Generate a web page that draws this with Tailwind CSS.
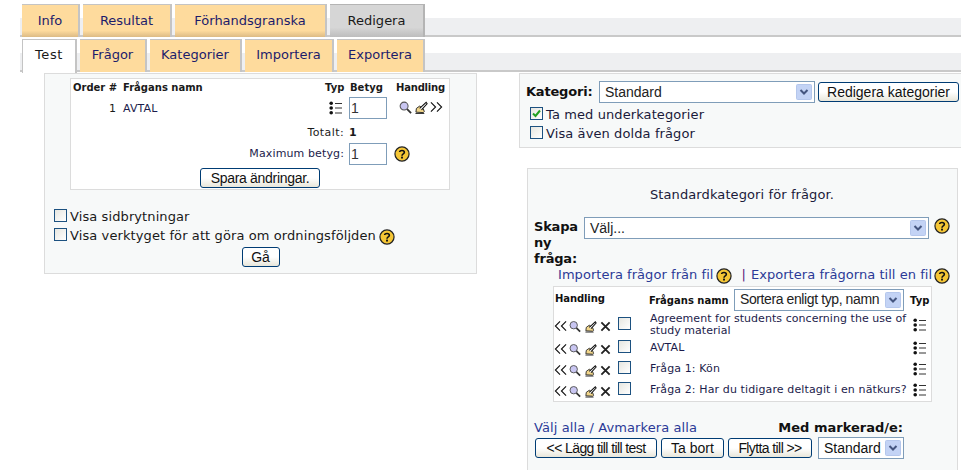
<!DOCTYPE html>
<html lang="sv">
<head>
<meta charset="UTF-8">
<title>Redigera test</title>
<script src="https://cdn.jsdelivr.net/npm/@tailwindcss/browser@4"></script>
</head>
<body class="bg-white h-[470px] w-[961px] overflow-hidden font-['DejaVu_Sans',sans-serif] text-[13px] text-[#1a1a1a]">

<svg class="hidden">
  <symbol id="help" viewBox="0 0 17 17">
    <circle cx="8.5" cy="8.5" r="7.5" fill="#f5c635" stroke="#222" stroke-width="1.3"/>
    <path d="M6 6.5C6 4.2 11 4.2 11 6.6C11 8.4 8.5 8.2 8.5 10.3" fill="none" stroke="#111" stroke-width="1.7"/>
    <rect x="7.5" y="11.3" width="2" height="2" fill="#111"/>
  </symbol>
  <symbol id="list" viewBox="0 0 13 14">
    <circle cx="2.2" cy="2.2" r="1.8" fill="#111"/><circle cx="2.2" cy="7" r="1.8" fill="#111"/><circle cx="2.2" cy="11.8" r="1.8" fill="#111"/>
    <path d="M6 2.5h7M6 7h7M6 12h7" stroke="#333" stroke-width="1"/>
  </symbol>
  <symbol id="zoom" viewBox="0 0 14 14">
    <path d="M8.5 8.5L13 13" stroke="#333" stroke-width="2"/>
    <circle cx="5.5" cy="5.5" r="4.3" fill="#c9c6f2" stroke="#555" stroke-width="1.1"/>
  </symbol>
  <symbol id="edit" viewBox="0 0 14 14">
    <path d="M1 12L1.5 8L5 5.5L7 7L9 8.5L10 11.5L9 12.5Z" fill="#f2d68a" stroke="#222"/>
    <path d="M5 8L12 1.5L13 3L7 9.5" fill="#fff" stroke="#111" stroke-width="1.2"/>
    <path d="M0.5 13.5H10" stroke="#222"/>
  </symbol>
  <symbol id="right" viewBox="0 0 14 12">
    <path d="M1 1L6 6L1 11M7.5 1L12.5 6L7.5 11" fill="none" stroke="#111" stroke-width="1.2"/>
  </symbol>
  <symbol id="left" viewBox="0 0 14 12">
    <path d="M6.5 1L1.5 6L6.5 11M13 1L8 6L13 11" fill="none" stroke="#111" stroke-width="1.2"/>
  </symbol>
  <symbol id="del" viewBox="0 0 12 12">
    <path d="M1.5 1.5L10.5 10.5M10.5 1.5L1.5 10.5" stroke="#222" stroke-width="2"/>
  </symbol>
  <symbol id="arrow" viewBox="0 0 16 16">
    <rect x="0.5" y="0.5" width="15" height="15" rx="1" fill="#c3d3f5" stroke="#b5c7ec"/>
    <path d="M4.5 6L8 9.5L11.5 6" fill="none" stroke="#44557f" stroke-width="2"/>
  </symbol>
</svg>

<!-- flikar -->
<div class="relative h-[35px] pt-1 pl-[22px] flex gap-[3px]">
  <div class="absolute left-[20px] right-0 top-[18px] h-[19px] bg-[#eeeff1] border-b-2 border-[#c9c9c9]"></div>
  <div class="relative w-[58px] h-[33px] flex items-center justify-center bg-gradient-to-b from-[#fedb9d] from-80% to-[#dcbb85] border-t border-r-2 border-[#c4c4c4] text-[#1c1c6b]">Info</div>
  <div class="relative w-[89px] h-[33px] flex items-center justify-center bg-gradient-to-b from-[#fedb9d] from-80% to-[#dcbb85] border-t border-r-2 border-[#c4c4c4] text-[#1c1c6b]">Resultat</div>
  <div class="relative w-[152px] h-[33px] flex items-center justify-center bg-gradient-to-b from-[#fedb9d] from-80% to-[#dcbb85] border-t border-r-2 border-[#c4c4c4] text-[#1c1c6b]">Förhandsgranska</div>
  <div class="relative w-[95px] h-[33px] flex items-center justify-center bg-gradient-to-b from-[#d6d6d6] from-70% to-[#bdbdbd] border-t border-r-2 border-[#b4b4b4] text-[#1a1a1a]">Redigera</div>
</div>
<div class="relative h-[33px] mt-[4px] pl-[22px] flex gap-[3px]">
  <div class="absolute left-[20px] right-0 top-[14px] h-[19px] bg-[#eeeff1] border-b-2 border-[#c9c9c9]"></div>
  <div class="relative w-[55px] h-[34px] pb-[3px] flex items-center justify-center bg-white border-t border-r-2 border-l border-[#c4c4c4] text-[#1a1a1a] tracking-[0.6px] z-10">Test</div>
  <div class="relative w-[67px] h-[33px] pb-[2px] flex items-center justify-center bg-[#fedb9d] border-t border-r-2 border-[#c4c4c4] text-[#1c1c6b]">Frågor</div>
  <div class="relative w-[92px] h-[33px] pb-[2px] flex items-center justify-center bg-[#fedb9d] border-t border-r-2 border-[#c4c4c4] text-[#1c1c6b]">Kategorier</div>
  <div class="relative w-[89px] h-[33px] pb-[2px] flex items-center justify-center bg-[#fedb9d] border-t border-r-2 border-[#c4c4c4] text-[#1c1c6b]">Importera</div>
  <div class="relative w-[88px] h-[33px] pb-[2px] flex items-center justify-center bg-[#fedb9d] border-t border-r-2 border-[#c4c4c4] text-[#1c1c6b]">Exportera</div>
</div>

<div class="flex items-start mt-[1px]">
  <!-- vänster -->
  <div class="ml-[44px] w-[433px] h-[201px] bg-[#f7f9f9] border border-[#dcdcdc] pt-[4px]">
    <div class="ml-[25px] w-[380px] h-[112px] bg-white border border-[#dcdcdc] text-[11px] tracking-[0.12px] relative">
      <div class="flex items-center h-[16px] mb-[2px] font-bold text-[10px] tracking-normal pl-[2px]">
        <span class="w-[50px]">Order #</span>
        <span class="w-[202px]">Frågans namn</span>
        <span class="w-[25px]">Typ</span>
        <span class="w-[46px]">Betyg</span>
        <span class="tracking-[-0.2px]">Handling</span>
      </div>
      <div class="flex items-center h-[22px]">
        <span class="w-[45px] text-right mr-[7px] pt-[3px]">1</span>
        <span class="w-[206px] text-[#1c1c4b] pt-[3px]">AVTAL</span>
        <svg class="w-[13px] h-[14px] mr-[7px]"><use href="#list"/></svg>
        <input value="1" class="w-[38px] h-[22px] border border-[#7f9db9] bg-white pl-[1px] font-['Liberation_Sans',sans-serif] text-[14px] text-[#333]">
        <svg class="w-[13px] h-[13px] ml-[12px] mb-[2px]"><use href="#zoom"/></svg>
        <svg class="w-[13px] h-[13px] ml-[3px] mb-[2px]"><use href="#edit"/></svg>
        <svg class="w-[13px] h-[12px] ml-[2px] mb-[2px]"><use href="#right"/></svg>
      </div>
      <div class="flex h-[16px] items-center mt-[6px]">
        <span class="w-[273px] text-right mr-[5px] tracking-[0.4px]">Totalt:</span>
        <span class="font-bold">1</span>
      </div>
      <div class="flex items-center h-[22px] mt-[2px]">
        <span class="w-[273px] text-right mr-[5px] text-[#1c1c4b] whitespace-nowrap">Maximum betyg:</span>
        <input value="1" class="w-[38px] h-[22px] border border-[#7f9db9] bg-white pl-[1px] font-['Liberation_Sans',sans-serif] text-[14px] text-[#333]">
        <svg class="w-[16px] h-[16px] ml-[7px]"><use href="#help"/></svg>
      </div>
      <div class="flex justify-center mt-[3px]">
        <button class="w-[120px] h-[20px] rounded-[3px] border border-[#003c74] bg-gradient-to-b from-white from-50% to-[#e8e6da] font-['Liberation_Sans',sans-serif] text-[14px] tracking-[-0.3px] leading-[16px] text-[#111]">Spara ändringar.</button>
      </div>
    </div>
    <div class="mt-[17px] ml-[9px] flex items-center h-[19px] tracking-[0.1px]">
      <span class="w-[13px] h-[13px] mr-[3px] mb-[2px] border border-[#1c5180] bg-gradient-to-br from-[#e6e6e0] to-white"></span>
      <span>Visa sidbrytningar</span>
    </div>
    <div class="ml-[9px] flex items-center h-[19px] tracking-[0.1px]">
      <span class="w-[13px] h-[13px] mr-[3px] mb-[2px] border border-[#1c5180] bg-gradient-to-br from-[#e6e6e0] to-white"></span>
      <span>Visa verktyget för att göra om ordningsföljden</span>
      <svg class="w-[16px] h-[16px] ml-[3px] mt-[2px]"><use href="#help"/></svg>
    </div>
    <div class="flex justify-center mt-[2px]">
      <button class="w-[38px] h-[20px] rounded-[3px] border border-[#003c74] bg-gradient-to-b from-white from-50% to-[#e8e6da] font-['Liberation_Sans',sans-serif] text-[14px] leading-[16px] text-[#111]">Gå</button>
    </div>
  </div>

  <!-- höger -->
  <div class="ml-[42px] w-[442px]">
    <div class="h-[75px] bg-[#f7f9f9] border-l border-b border-t border-[#dcdcdc] pl-[6px] pt-[7px] tracking-[0.1px]">
      <div class="flex items-center h-[22px]">
        <span class="font-bold text-[#111] w-[73px] tracking-[-0.2px]">Kategori:</span>
        <div class="w-[216px] h-[22px] border border-[#7f9db9] bg-white flex items-center justify-between pl-[5px] pr-[2px] font-['Liberation_Sans',sans-serif] text-[14px] text-[#222] tracking-normal">Standard<svg class="w-[16px] h-[16px]"><use href="#arrow"/></svg></div>
        <button class="ml-[3px] w-[141px] h-[20px] rounded-[3px] border border-[#003c74] bg-gradient-to-b from-white from-50% to-[#e8e6da] font-['Liberation_Sans',sans-serif] text-[14px] tracking-normal leading-[16px] text-[#111]">Redigera kategorier</button>
      </div>
      <div class="flex items-center h-[19px] ml-[4px] mt-[2px]">
        <span class="w-[13px] h-[13px] mr-[3px] mb-[2px] border border-[#1c5180] bg-gradient-to-br from-[#e6e6e0] to-white flex items-center justify-center">
          <svg viewBox="0 0 9 9" class="w-[9px] h-[9px]"><path d="M1 4.5L3.5 7L8 1.5" fill="none" stroke="#21a121" stroke-width="2"/></svg>
        </span>
        <span class="text-[#1a1a3a]">Ta med underkategorier</span>
      </div>
      <div class="flex items-center h-[19px] ml-[4px]">
        <span class="w-[13px] h-[13px] mr-[3px] mb-[2px] border border-[#1c5180] bg-gradient-to-br from-[#e6e6e0] to-white"></span>
        <span class="text-[#1a1a3a]">Visa även dolda frågor</span>
      </div>
    </div>

    <div class="ml-[8px] mt-[20px] w-[431px] h-[310px] bg-[#f7f9f9] border border-[#dcdcdc]">
      <div class="text-center mt-[18px] h-[16px] leading-[16px] pr-[1px] text-[#1a1a3a] tracking-[0.1px]">Standardkategori för frågor.</div>
      <div class="flex mt-[14px] h-[48px] pl-[6px]">
        <span class="w-[50px] font-bold leading-[16px] text-[#111] pt-[2px] tracking-[-0.2px]">Skapa ny fråga:</span>
        <div class="w-[345px] h-[22px] border border-[#7f9db9] bg-white flex items-center justify-between pl-[5px] pr-[2px] font-['Liberation_Sans',sans-serif] text-[14px] text-[#222]">Välj...<svg class="w-[16px] h-[16px]"><use href="#arrow"/></svg></div>
        <svg class="w-[16px] h-[16px] ml-[5px] mt-[1px]"><use href="#help"/></svg>
      </div>
      <div class="flex items-center h-[16px] mt-[2px] pl-[30px] text-[#2b3a97] tracking-[0.05px]">
        <span>Importera frågor från fil</span>
        <svg class="w-[16px] h-[16px] ml-[3px] mt-[2px]"><use href="#help"/></svg>
        <span class="ml-[9px] text-[#5b1a7a]">|</span>
        <span class="ml-[5px]">Exportera frågorna till en fil</span>
        <svg class="w-[16px] h-[16px] ml-[2px] mt-[2px]"><use href="#help"/></svg>
      </div>
      <div class="ml-[25px] mt-[3px] w-[379px] h-[116px] bg-white border border-[#dcdcdc] text-[11px] tracking-[0.12px] overflow-hidden">
        <div class="flex items-center h-[25px] font-bold text-[10px] tracking-normal text-[#111]">
          <span class="w-[95px] pl-[1px] pb-[2px] tracking-[-0.1px]">Handling</span>
          <span class="w-[85px] pt-[1px]">Frågans namn</span>
          <div class="w-[170px] h-[22px] border border-[#7f9db9] bg-white flex items-center justify-between pl-[5px] pr-[2px] font-['Liberation_Sans',sans-serif] font-normal text-[14px] tracking-[-0.4px] text-[#222] whitespace-nowrap">Sortera enligt typ, namn<svg class="w-[16px] h-[16px]"><use href="#arrow"/></svg></div>
          <span class="ml-[6px] pt-[1px]">Typ</span>
        </div>
        <div class="flex items-center h-[25px]">
          <div class="w-[96px] h-[25px] flex items-center pt-[2px]">
            <svg class="w-[13px] h-[12px] mt-[1px]"><use href="#left"/></svg>
            <svg class="w-[12px] h-[13px] ml-[2px] mt-[1px]"><use href="#zoom"/></svg>
            <svg class="w-[12px] h-[13px] ml-[4px] mt-[1px]"><use href="#edit"/></svg>
            <svg class="w-[11px] h-[11px] ml-[3px] mt-[1px]"><use href="#del"/></svg>
            <span class="w-[13px] h-[13px] ml-[7px] mb-[4px] border border-[#1c5180] bg-gradient-to-br from-[#e6e6e0] to-white"></span>
          </div>
          <span class="w-[264px] leading-[12px] pt-[1px] text-[#1c1c4b] tracking-[0.05px]">Agreement for students concerning the use of study material</span>
          <svg class="w-[13px] h-[14px] ml-[-1px]"><use href="#list"/></svg>
        </div>
        <div class="flex items-center h-[21px]">
          <div class="w-[96px] flex items-center pt-[2px]">
            <svg class="w-[13px] h-[12px] mt-[1px]"><use href="#left"/></svg>
            <svg class="w-[12px] h-[13px] ml-[2px] mt-[1px]"><use href="#zoom"/></svg>
            <svg class="w-[12px] h-[13px] ml-[4px] mt-[1px]"><use href="#edit"/></svg>
            <svg class="w-[11px] h-[11px] ml-[3px] mt-[1px]"><use href="#del"/></svg>
            <span class="w-[13px] h-[13px] ml-[7px] mb-[4px] border border-[#1c5180] bg-gradient-to-br from-[#e6e6e0] to-white"></span>
          </div>
          <span class="w-[264px] pt-[2px] text-[#1c1c4b]">AVTAL</span>
          <svg class="w-[13px] h-[14px] ml-[-1px]"><use href="#list"/></svg>
        </div>
        <div class="flex items-center h-[21px]">
          <div class="w-[96px] flex items-center pt-[2px]">
            <svg class="w-[13px] h-[12px] mt-[1px]"><use href="#left"/></svg>
            <svg class="w-[12px] h-[13px] ml-[2px] mt-[1px]"><use href="#zoom"/></svg>
            <svg class="w-[12px] h-[13px] ml-[4px] mt-[1px]"><use href="#edit"/></svg>
            <svg class="w-[11px] h-[11px] ml-[3px] mt-[1px]"><use href="#del"/></svg>
            <span class="w-[13px] h-[13px] ml-[7px] mb-[4px] border border-[#1c5180] bg-gradient-to-br from-[#e6e6e0] to-white"></span>
          </div>
          <span class="w-[264px] pt-[2px] text-[#1c1c4b]">Fråga 1: Kön</span>
          <svg class="w-[13px] h-[14px] ml-[-1px]"><use href="#list"/></svg>
        </div>
        <div class="flex items-center h-[21px]">
          <div class="w-[96px] flex items-center pt-[2px]">
            <svg class="w-[13px] h-[12px] mt-[1px]"><use href="#left"/></svg>
            <svg class="w-[12px] h-[13px] ml-[2px] mt-[1px]"><use href="#zoom"/></svg>
            <svg class="w-[12px] h-[13px] ml-[4px] mt-[1px]"><use href="#edit"/></svg>
            <svg class="w-[11px] h-[11px] ml-[3px] mt-[1px]"><use href="#del"/></svg>
            <span class="w-[13px] h-[13px] ml-[7px] mb-[4px] border border-[#1c5180] bg-gradient-to-br from-[#e6e6e0] to-white"></span>
          </div>
          <span class="w-[264px] pt-[2px] text-[#1c1c4b] whitespace-nowrap">Fråga 2: Har du tidigare deltagit i en nätkurs?</span>
          <svg class="w-[13px] h-[14px] ml-[-1px]"><use href="#list"/></svg>
        </div>
      </div>
      <div class="flex justify-between items-center h-[16px] mt-[18px] pl-[6px] pr-[54px]">
        <span class="text-[#2b3a97] tracking-[0.1px]">Välj alla / Avmarkera alla</span>
        <span class="font-bold text-[#111]">Med markerad/e:</span>
      </div>
      <div class="flex items-center mt-[1px] pl-[7px] font-['Liberation_Sans',sans-serif] text-[14px] text-[#111]">
        <button class="w-[122px] h-[20px] rounded-[3px] border border-[#003c74] bg-gradient-to-b from-white from-50% to-[#e8e6da] leading-[16px] tracking-[-0.6px]">&lt;&lt; Lägg till till test</button>
        <button class="ml-[4px] w-[63px] h-[20px] rounded-[3px] border border-[#003c74] bg-gradient-to-b from-white from-50% to-[#e8e6da] leading-[16px]">Ta bort</button>
        <button class="ml-[4px] w-[84px] h-[20px] rounded-[3px] border border-[#003c74] bg-gradient-to-b from-white from-50% to-[#e8e6da] leading-[16px] tracking-[-0.6px]">Flytta till &gt;&gt;</button>
        <div class="ml-[6px] w-[86px] h-[22px] border border-[#7f9db9] bg-white flex items-center justify-between pl-[5px] pr-[2px]">Standard<svg class="w-[16px] h-[16px]"><use href="#arrow"/></svg></div>
      </div>
    </div>
  </div>
</div>
</body>
</html>
